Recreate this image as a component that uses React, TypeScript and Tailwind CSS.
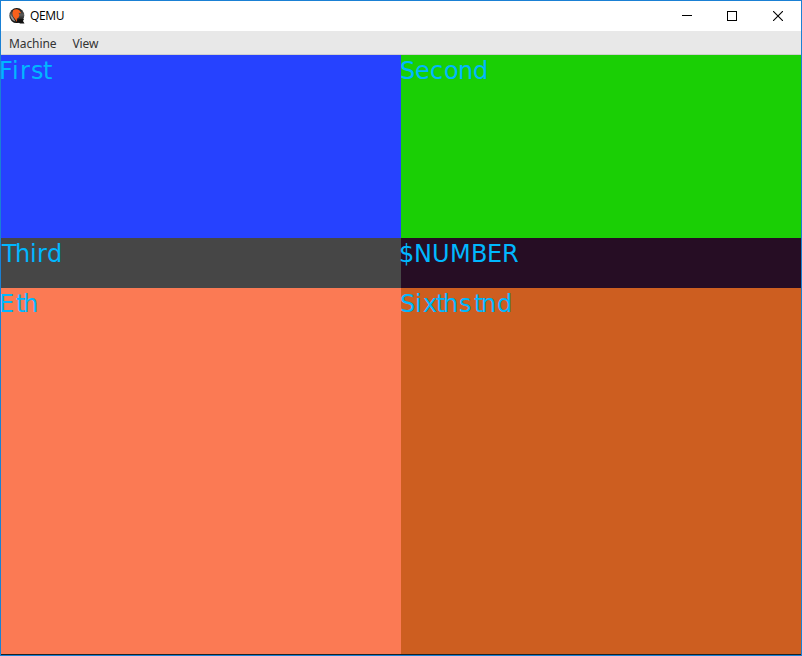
type Glyph = [string, number];

function Label({ glyphs, start = 0 }: { glyphs: Glyph[]; start?: number }) {
  return (
    <div
      className="flex h-[32px] whitespace-pre font-['DejaVu_Sans',sans-serif] text-[24px] leading-[32px] text-[#00b7ff]"
      style={{ marginLeft: start }}
    >
      {glyphs.map(([char, advance], i) => (
        <span key={i} className="shrink-0" style={{ width: advance }}>
          {char}
        </span>
      ))}
    </div>
  );
}

function Logo() {
  return (
    <svg className="h-4 w-4" viewBox="0 0 16 16">
      <defs>
        <linearGradient id="ball" x1="0" y1="0" x2="0" y2="1">
          <stop offset="0" stopColor="#0c0c0c" />
          <stop offset="0.45" stopColor="#5c5c5c" />
          <stop offset="0.65" stopColor="#333" />
          <stop offset="1" stopColor="#050505" />
        </linearGradient>
      </defs>
      <circle cx="7.8" cy="7.6" r="7.5" fill="url(#ball)" />
      <path d="M10 11H15L14 13 15.5 15.5H11L8 13Z" fill="#111" />
      <path d="M4.2 2.2C6 .6 8.8 1 10.6 2.6L12.2 5.2 9.6 4.8 10.4 7.2 9.4 9.7 7.8 10.7 8 14 6.2 11.2 4.2 8.4 3.4 5Z" fill="#f8601c" />
      <path d="M1.5 6.5 4 9.5 6.5 13.5C4 13.2 1.5 10.5 1.5 6.5Z" fill="#999" />
    </svg>
  );
}

export default function App() {
  return (
    <div className="flex h-[656px] w-[802px] flex-col overflow-hidden border border-[#1a80d4] bg-white">
      <header className="flex h-[30px] shrink-0 items-center pl-2">
        <Logo />
        <h1 className="ml-[5px] flex-1 font-['Open_Sans',sans-serif] text-[12px] leading-[30px] tracking-[-0.35px] text-black">QEMU</h1>
        <div className="flex">
          <button className="flex h-[30px] w-[46px] items-center justify-center" aria-label="Minimize">
            <svg className="h-[10px] w-[10px]" viewBox="0 0 10 10" shapeRendering="crispEdges"><path d="M0 4.5H10" stroke="#000" /></svg>
          </button>
          <button className="flex h-[30px] w-[44px] items-center justify-center" aria-label="Maximize">
            <svg className="h-[10px] w-[10px]" viewBox="0 0 10 10" shapeRendering="crispEdges"><path d="M.5 .5H9.5V9.5H.5Z" fill="none" stroke="#000" /></svg>
          </button>
          <button className="flex h-[30px] w-[47px] items-center justify-center pl-px" aria-label="Close">
            <svg className="h-[10px] w-[10px]" viewBox="0 0 10 10"><path d="M0 0 10 10M10 0 0 10" stroke="#000" strokeWidth="1.1" /></svg>
          </button>
        </div>
      </header>
      <nav className="flex h-[24px] shrink-0 gap-4 border-b border-[#cfcfcf] bg-[#e8e8e8] pl-2 font-['Noto_Sans',sans-serif] text-[12px] leading-[25px] tracking-[-0.1px] text-[#333]">
        <span>Machine</span>
        <span>View</span>
      </nav>
      <main className="grid h-[599px] shrink-0 grid-cols-2 grid-rows-[183px_50px_366px]">
        <section className="bg-[#2642ff]">
          <Label start={-2} glyphs={[["F", 13], ["i", 8], ["r", 11], ["s", 12], ["t", 9]]} />
        </section>
        <section className="bg-[#1acf05]">
          <Label start={-1} glyphs={[["S", 15], ["e", 15], ["c", 14], ["o", 14], ["n", 15], ["d", 15]]} />
        </section>
        <section className="bg-[#464646]">
          <Label start={1} glyphs={[["T", 13], ["h", 15], ["i", 7], ["r", 10], ["d", 15]]} />
        </section>
        <section className="bg-[#260d24]">
          <Label start={-2} glyphs={[["$", 15], ["N", 18], ["U", 18], ["M", 21], ["B", 16], ["E", 15], ["R", 17]]} />
        </section>
        <section className="bg-[#fb7a54]">
          <Label start={-2} glyphs={[["E", 17], ["t", 7], ["h", 15]]} />
        </section>
        <section className="bg-[#cd5e20]">
          <Label start={-1} glyphs={[["S", 15], ["i", 8], ["x", 13], ["t", 7], ["h", 16], ["s", 15], ["t", 7], ["n", 16], ["d", 15]]} />
        </section>
      </main>
      <div className="h-px shrink-0 bg-[#202020]" />
    </div>
  );
}
